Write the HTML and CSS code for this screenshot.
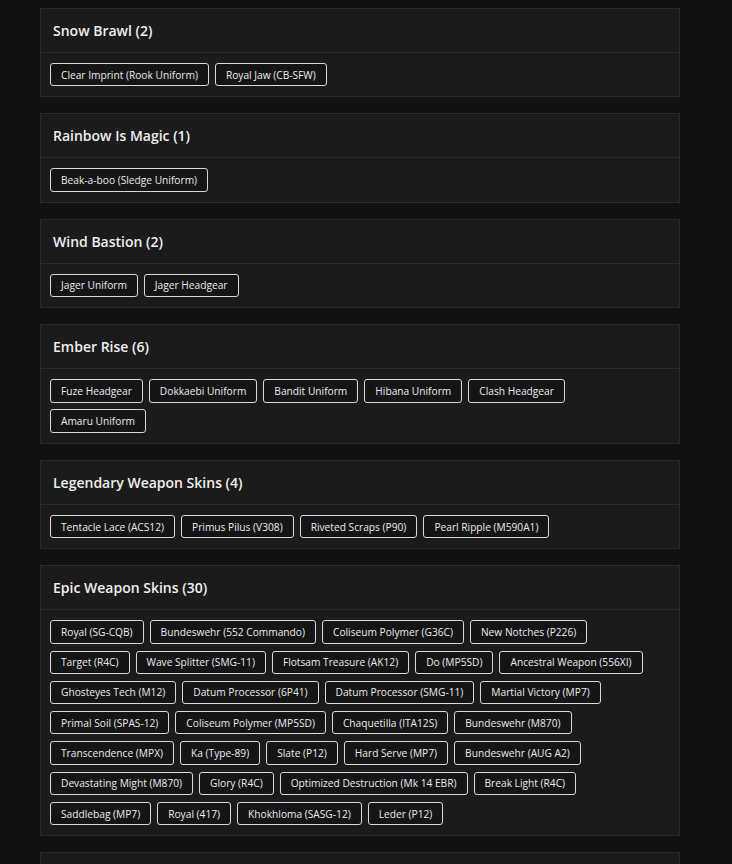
FILE: index.html
```html
<!DOCTYPE html>
<html>
<head>
<meta charset="utf-8">
<link rel="stylesheet" href="styles.css">
</head>
<body>
<div class="page">
  <section class="card">
    <h2 class="card-title">Snow Brawl (2)</h2>
    <div class="chips">
      <span class="chip">Clear Imprint (Rook Uniform)</span>
      <span class="chip">Royal Jaw (CB-SFW)</span>
    </div>
  </section>
  <section class="card">
    <h2 class="card-title">Rainbow Is Magic (1)</h2>
    <div class="chips">
      <span class="chip">Beak-a-boo (Sledge Uniform)</span>
    </div>
  </section>
  <section class="card">
    <h2 class="card-title">Wind Bastion (2)</h2>
    <div class="chips">
      <span class="chip">Jager Uniform</span>
      <span class="chip">Jager Headgear</span>
    </div>
  </section>
  <section class="card">
    <h2 class="card-title">Ember Rise (6)</h2>
    <div class="chips">
      <span class="chip">Fuze Headgear</span>
      <span class="chip">Dokkaebi Uniform</span>
      <span class="chip">Bandit Uniform</span>
      <span class="chip">Hibana Uniform</span>
      <span class="chip">Clash Headgear</span>
      <span class="chip">Amaru Uniform</span>
    </div>
  </section>
  <section class="card">
    <h2 class="card-title">Legendary Weapon Skins (4)</h2>
    <div class="chips">
      <span class="chip">Tentacle Lace (ACS12)</span>
      <span class="chip">Primus Pilus (V308)</span>
      <span class="chip">Riveted Scraps (P90)</span>
      <span class="chip">Pearl Ripple (M590A1)</span>
    </div>
  </section>
  <section class="card">
    <h2 class="card-title">Epic Weapon Skins (30)</h2>
    <div class="chips">
      <span class="chip">Royal (SG-CQB)</span>
      <span class="chip">Bundeswehr (552 Commando)</span>
      <span class="chip">Coliseum Polymer (G36C)</span>
      <span class="chip">New Notches (P226)</span>
      <span class="chip">Target (R4C)</span>
      <span class="chip">Wave Splitter (SMG-11)</span>
      <span class="chip">Flotsam Treasure (AK12)</span>
      <span class="chip">Do (MP5SD)</span>
      <span class="chip">Ancestral Weapon (556XI)</span>
      <span class="chip">Ghosteyes Tech (M12)</span>
      <span class="chip">Datum Processor (6P41)</span>
      <span class="chip">Datum Processor (SMG-11)</span>
      <span class="chip">Martial Victory (MP7)</span>
      <span class="chip">Primal Soil (SPAS-12)</span>
      <span class="chip">Coliseum Polymer (MP5SD)</span>
      <span class="chip">Chaquetilla (ITA12S)</span>
      <span class="chip">Bundeswehr (M870)</span>
      <span class="chip">Transcendence (MPX)</span>
      <span class="chip">Ka (Type-89)</span>
      <span class="chip">Slate (P12)</span>
      <span class="chip">Hard Serve (MP7)</span>
      <span class="chip">Bundeswehr (AUG A2)</span>
      <span class="chip">Devastating Might (M870)</span>
      <span class="chip">Glory (R4C)</span>
      <span class="chip">Optimized Destruction (Mk 14 EBR)</span>
      <span class="chip">Break Light (R4C)</span>
      <span class="chip">Saddlebag (MP7)</span>
      <span class="chip">Royal (417)</span>
      <span class="chip">Khokhloma (SASG-12)</span>
      <span class="chip">Leder (P12)</span>
    </div>
  </section>
  <section class="card">
    <h2 class="card-title">Elite Skins (12)</h2>
    <div class="chips">
      <span class="chip">Elite</span>
    </div>
  </section>
</div>
</body>
</html>
```
FILE: styles.css
```css
html, body {
  margin: 0;
  padding: 0;
  background: #121212;
  color: #ececec;
  font-family: "Open Sans", "DejaVu Sans", sans-serif;
}
.page {
  width: 640px;
  margin-left: 40px;
  padding-top: 8px;
  display: flex;
  flex-direction: column;
  gap: 16px;
}
.card {
  background: #1b1b1b;
  border: 1px solid #2a2a2a;
}
.card-title {
  margin: 0;
  height: 44px;
  box-sizing: border-box;
  padding: 0 12px;
  display: flex;
  align-items: center;
  font-size: 14px;
  font-weight: 600;
  color: #f0f0f0;
  border-bottom: 1px solid #2c2c2c;
}
.chips {
  display: flex;
  flex-wrap: wrap;
  gap: 6.9px 6px;
  padding: 10px 24px 10px 9px;
}
.chip {
  height: 23.4px;
  box-sizing: border-box;
  display: inline-flex;
  align-items: center;
  padding: 0 10px;
  border: 1px solid #d8d8d8;
  border-radius: 3px;
  background: #151515;
  font-size: 10.2px;
  color: #ececec;
  white-space: nowrap;
}
```
